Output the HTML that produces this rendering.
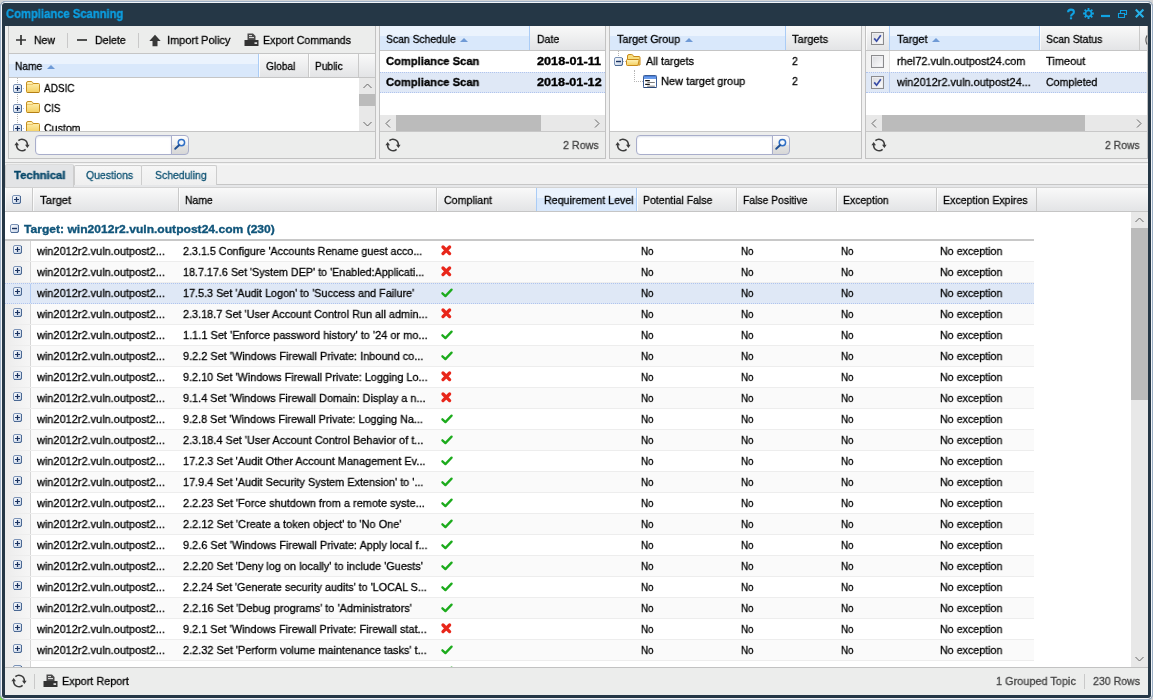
<!DOCTYPE html>
<html><head><meta charset="utf-8"><title>Compliance Scanning</title>
<style>
*{box-sizing:border-box;margin:0;padding:0}
html,body{width:1153px;height:700px;overflow:hidden}
body{background:#d2d3d5;font-family:"Liberation Sans",sans-serif;font-size:12px;color:#000;position:relative}
.abs{position:absolute}
svg.abs{display:block;overflow:visible}
#win{position:absolute;left:0;top:1px;width:1153px;height:699px;border:1px solid #9db0c6;border-radius:5px;background:#253746;box-shadow:inset 0 0 0 1px #f2f5f9}
#content{position:absolute;left:5px;top:26px;width:1143px;height:669px;background:#f0f0f0}
.panel{position:absolute;top:26px;height:133px;border:1px solid #c2c2c2;border-top:none;background:#ecedec}
.hc{position:absolute;border-right:1px solid #c9c9c9;box-shadow:inset 1px 0 0 rgba(255,255,255,.75)}
.hc.sort{background:linear-gradient(#ebf3fd 0,#ebf3fd 42%,#d9e8fb 43%,#d9e8fb 100%);border-right:1px solid #aaccf6;box-shadow:-1px 0 0 #aaccf6}
.arrow{position:absolute;width:0;height:0;border-left:4px solid transparent;border-right:4px solid transparent;border-bottom:4px solid #6f9ad6}
.pbody{position:absolute;background:#fff;overflow:hidden}
.t{will-change:transform;-webkit-text-stroke:0.3px;position:absolute;white-space:nowrap;font-size:11.5px;line-height:14px;transform-origin:0 50%}
.b{font-weight:bold}
.search{position:absolute;height:20px;border:1px solid #a9aecb;border-radius:4px 0 0 4px;background:#fff;box-shadow:inset 0 1px 2px #dfe4ee}
.sbtn{position:absolute;width:18px;height:20px;border:1px solid #a9aecb;border-radius:0 4px 4px 0;background:linear-gradient(#fdfdfd 0,#f1f1f1 48%,#e3e3e3 52%,#d7d7d7 100%)}
.tab{position:absolute;border:1px solid #cdcdcd;border-bottom:none;background:linear-gradient(#f6f6f6,#efefef);border-radius:2px 2px 0 0}
.tab.act{background:#e3e4e6;border-color:#dcdcdc #cdcdcd}
#gbody{position:absolute;left:5px;top:212px;width:1126px;height:455px;background:#fff;overflow:hidden}
#gbody .r{position:absolute;left:0;width:1029px;height:21px;border-bottom:1px solid #ededed;background:#fff}
#gbody .r.alt{background:#fafafa}
#gbody .r.sel{background:#dfe8f6;border-bottom:1px dotted #b0c4ee;border-top:1px dotted #b0c4ee}
.c0{position:absolute;left:0;top:0;width:26px;height:100%;border-right:1px solid #d6d6d6;background:linear-gradient(90deg,#ececec,#f6f6f6)}
.r.sel .c0{background:#dfe8f6;border-right-color:#b5cdf3}
#vsb{position:absolute;left:1131px;top:212px;width:17px;height:455px;background:#e8e8e8}
#fbar{position:absolute;left:5px;top:667px;width:1143px;height:28px;border-top:1px solid #c2c2c2;background:#ecedec}
.cb{position:absolute;width:13px;height:13px;border:1px solid #8b8b8d;background:linear-gradient(135deg,#d9dade,#fdfdfd);box-shadow:inset 0 0 0 1px #ededf0}
.t.b{-webkit-text-stroke:0.35px}
</style></head><body>
<svg width="0" height="0" style="position:absolute"><defs><linearGradient id="pg" x1="0" y1="0" x2="1" y2="1"><stop offset="0" stop-color="#ffffff"/><stop offset="1" stop-color="#c0cfe5"/></linearGradient><linearGradient id="fg" x1="0" y1="0" x2="0" y2="1"><stop offset="0" stop-color="#fff3b8"/><stop offset="1" stop-color="#f3cf61"/></linearGradient></defs></svg>
<div class="abs" style="left:0px;top:695px;width:5px;height:5px;background:#7ed348"></div>
<div id="win"></div>
<div id="content"></div>
<div class="t b" style="left:6.20px;top:7px;transform:scaleX(0.9068);color:#0c9fe2;font-size:12.4px">Compliance Scanning</div>
<svg class="abs" style="left:1066px;top:7px" width="82" height="14" viewBox="0 0 82 14"><g fill="none" stroke="#10a3e3">
  <path d="M2.1 5.3q0-2.7 2.9-2.7q2.9 0 2.9 2.4q0 1.3-1.4 2.2q-1.5 1-1.5 2.3" stroke-width="2.1"/>
  <path d="M3.9 11.3h2.2" stroke-width="2"/>
  <circle cx="22.5" cy="6.5" r="3" stroke-width="1.7"/>
  <path d="M22.5 1.1v2M22.5 9.9v2M17.1 6.5h2M25.9 6.5h2M18.7 2.7l1.4 1.4M24.9 8.9l1.4 1.4M18.7 10.3l1.4-1.4M24.9 4.1l1.4-1.4" stroke-width="1.9"/>
  <path d="M35 9h9" stroke-width="2.2"/>
  <path d="M52.5 6.5h6v4h-6z M54.5 6V3.5h6v4h-1.8" stroke-width="1.1"/>
  <path d="M69.8 2.6l7.6 7.6M77.4 2.6l-7.6 7.6" stroke-width="2.1" stroke="#27b2ea"/>
 </g></svg>
<div class="panel" style="left:8px;width:368px"></div>
<div class="abs" style="left:9px;top:53px;width:366px;height:1px;background:#c5c5c5"></div>
<svg class="abs" style="left:16px;top:35px" width="10" height="10" viewBox="0 0 10 10"><path d="M5 0v10M0 5h10" stroke="#333" stroke-width="1.7"/></svg>
<div class="t" style="left:34.30px;top:33px;transform:scaleX(0.9087)">New</div>
<div class="abs" style="left:67px;top:33px;width:1px;height:15px;background:#c9c9c9"></div>
<svg class="abs" style="left:77px;top:35px" width="10" height="10" viewBox="0 0 10 10"><path d="M0 5h10" stroke="#333" stroke-width="1.7"/></svg>
<div class="t" style="left:95.00px;top:33px;transform:scaleX(0.9249)">Delete</div>
<div class="abs" style="left:138px;top:33px;width:1px;height:15px;background:#c9c9c9"></div>
<svg class="abs" style="left:148.8px;top:34.5px" width="12" height="11" viewBox="0 0 12 11"><path d="M6 -0.3L11.7 6H8.5V11.3H3.5V6H0.3z" fill="#383838"/></svg>
<div class="t" style="left:166.50px;top:33px;transform:scaleX(0.9538)">Import Policy</div>
<svg class="abs" style="left:243.5px;top:33px" width="15" height="13" viewBox="0 0 15 13"><path d="M3.5 0.5h5.5l2.5 2.5V7h-8z" fill="#4a4a4a"/><path d="M5 2.6h3M5 4.6h5" stroke="#e6e6e6" stroke-width="1"/><path d="M0.5 7h14v6h-14z" fill="#333"/><rect x="10.5" y="9.3" width="2.6" height="1.6" fill="#f0f0f0"/></svg>
<div class="t" style="left:263.30px;top:33px;transform:scaleX(0.9239)">Export Commands</div>
<div class="abs" style="left:9px;top:54px;width:366px;height:23px;background:linear-gradient(#f9f9f9,#e3e4e6)"></div>
<div class="abs" style="left:9px;top:77px;width:366px;height:1px;background:#c5c5c5"></div>
<div class="hc sort" style="left:9px;top:54px;width:250px;height:23px;box-shadow:none;"></div>
<div class="hc" style="left:259px;top:54px;width:50px;height:23px;"></div>
<div class="hc" style="left:309px;top:54px;width:50px;height:23px;"></div>
<div class="t" style="left:15.30px;top:59px;transform:scaleX(0.8870)">Name</div>
<i class="arrow" style="left:47px;top:65px"></i>
<div class="t" style="left:265.60px;top:59px;transform:scaleX(0.8828)">Global</div>
<div class="t" style="left:315.30px;top:59px;transform:scaleX(0.8858)">Public</div>
<div class="pbody" style="left:9px;top:78px;width:366px;height:53px">
<div class="abs" style="left:350px;top:0px;width:16px;height:53px;background:#e8e8e8"></div>
<div class="abs" style="left:350px;top:16px;width:16px;height:12px;background:#bbbbbb"></div>
<svg class="abs" style="left:353.5px;top:5px" width="9" height="6" viewBox="0 0 9 6"><path d="M0.5 5L4.5 1L8.5 5" fill="none" stroke="#666" stroke-width="1"/></svg>
<svg class="abs" style="left:353.5px;top:42.5px" width="9" height="6" viewBox="0 0 9 6"><path d="M0.5 1L4.5 5L8.5 1" fill="none" stroke="#666" stroke-width="1"/></svg>
<div class="abs" style="left:8px;top:0px;width:0px;height:53px;border-left:1px dotted #b5b5b5"></div>
<svg class="abs" style="left:4px;top:6px" width="9" height="9" viewBox="0 0 9 9"><rect x="0.5" y="0.5" width="8" height="8" rx="1.5" fill="url(#pg)" stroke="#7a92b6"/><path d="M1 8.5h6q1.5 0 1.5-1.5v-6" fill="none" stroke="#4b6994"/><path d="M2 4.5h5M4.5 2v5" stroke="#1b3361" stroke-width="1.2"/></svg>
<svg class="abs" style="left:17px;top:3px" width="14" height="12" viewBox="0 0 14 12"><path d="M0.5 2q0-1.5 1.5-1.5h3.2q1 0 1.4 0.9l0.5 1.1h5.4q1 0 1 1v7q0 1-1 1h-11q-1 0-1-1z" fill="url(#fg)" stroke="#c8901e"/><path d="M1 3.5h6" stroke="#e3b655" stroke-width="1" opacity="0.7"/><path d="M1 11.5h12" stroke="#a8740f" stroke-width="1" opacity="0.6"/></svg>
<div class="abs" style="left:14px;top:10px;width:1px;height:1px;background:#c4c4c4"></div>
<div class="t" style="left:35.00px;top:3px;transform:scaleX(0.8689)">ADSIC</div>
<svg class="abs" style="left:4px;top:26px" width="9" height="9" viewBox="0 0 9 9"><rect x="0.5" y="0.5" width="8" height="8" rx="1.5" fill="url(#pg)" stroke="#7a92b6"/><path d="M1 8.5h6q1.5 0 1.5-1.5v-6" fill="none" stroke="#4b6994"/><path d="M2 4.5h5M4.5 2v5" stroke="#1b3361" stroke-width="1.2"/></svg>
<svg class="abs" style="left:17px;top:23px" width="14" height="12" viewBox="0 0 14 12"><path d="M0.5 2q0-1.5 1.5-1.5h3.2q1 0 1.4 0.9l0.5 1.1h5.4q1 0 1 1v7q0 1-1 1h-11q-1 0-1-1z" fill="url(#fg)" stroke="#c8901e"/><path d="M1 3.5h6" stroke="#e3b655" stroke-width="1" opacity="0.7"/><path d="M1 11.5h12" stroke="#a8740f" stroke-width="1" opacity="0.6"/></svg>
<div class="abs" style="left:14px;top:30px;width:1px;height:1px;background:#c4c4c4"></div>
<div class="t" style="left:35.00px;top:23px;transform:scaleX(0.8557)">CIS</div>
<svg class="abs" style="left:4px;top:46px" width="9" height="9" viewBox="0 0 9 9"><rect x="0.5" y="0.5" width="8" height="8" rx="1.5" fill="url(#pg)" stroke="#7a92b6"/><path d="M1 8.5h6q1.5 0 1.5-1.5v-6" fill="none" stroke="#4b6994"/><path d="M2 4.5h5M4.5 2v5" stroke="#1b3361" stroke-width="1.2"/></svg>
<svg class="abs" style="left:17px;top:43px" width="14" height="12" viewBox="0 0 14 12"><path d="M0.5 2q0-1.5 1.5-1.5h3.2q1 0 1.4 0.9l0.5 1.1h5.4q1 0 1 1v7q0 1-1 1h-11q-1 0-1-1z" fill="url(#fg)" stroke="#c8901e"/><path d="M1 3.5h6" stroke="#e3b655" stroke-width="1" opacity="0.7"/><path d="M1 11.5h12" stroke="#a8740f" stroke-width="1" opacity="0.6"/></svg>
<div class="abs" style="left:14px;top:50px;width:1px;height:1px;background:#c4c4c4"></div>
<div class="t" style="left:35.00px;top:43px;transform:scaleX(0.9233)">Custom</div>
</div>
<div class="abs" style="left:9px;top:131px;width:366px;height:1px;background:#c5c5c5"></div>
<svg class="abs" style="left:14px;top:138px" width="16" height="14" viewBox="0 0 16 14"><path d="M4.4 2.6A5.4 5.4 0 0 1 13.3 7.2M11.6 11.4A5.4 5.4 0 0 1 2.7 6.8" fill="none" stroke="#3c3c3c" stroke-width="1.6"/><path d="M11 6.7h4.6l-2.2 3.2z M0.4 7.3h4.6L2.7 4.1z" fill="#3c3c3c"/></svg>
<div class="search" style="left:35px;top:135px;width:137px"></div><div class="sbtn" style="left:171px;top:135px"></div><svg class="abs" style="left:173.6px;top:138.4px" width="12" height="13" viewBox="0 0 12 13"><circle cx="7.4" cy="4.6" r="3.2" fill="#f4f7fb" stroke="#2f6fc6" stroke-width="1.5"/><path d="M5 7.2L1.2 10.8" stroke="#1f4f93" stroke-width="1.9" stroke-linecap="round"/></svg>
<div class="panel" style="left:379px;width:227px"></div>
<div class="abs" style="left:380px;top:26px;width:225px;height:24px;background:linear-gradient(#f9f9f9,#e3e4e6)"></div>
<div class="abs" style="left:380px;top:50px;width:225px;height:1px;background:#c5c5c5"></div>
<div class="hc sort" style="left:380px;top:26px;width:150px;height:24px;box-shadow:none;"></div>
<div class="t" style="left:386.20px;top:32px;transform:scaleX(0.9020)">Scan Schedule</div>
<i class="arrow" style="left:460px;top:38px"></i>
<div class="t" style="left:536.50px;top:32px;transform:scaleX(0.9133)">Date</div>
<div class="pbody" style="left:380px;top:51px;width:225px;height:80px">
<div class="abs" style="left:0px;top:21px;width:225px;height:21px;background:#dfe8f6;border-top:1px dotted #b0c4ee;border-bottom:1px dotted #b0c4ee"></div>
<div class="t b" style="left:6.20px;top:3px;transform:scaleX(0.9736)">Compliance Scan</div>
<div class="t b" style="left:156.50px;top:3px;transform:scaleX(1.1010)">2018-01-11</div>
<div class="t b" style="left:6.20px;top:24px;transform:scaleX(0.9736)">Compliance Scan</div>
<div class="t b" style="left:156.50px;top:24px;transform:scaleX(1.0995)">2018-01-12</div>
<div class="abs" style="left:0px;top:64px;width:225px;height:16px;background:#e8e8e8"></div>
<div class="abs" style="left:16px;top:64px;width:145px;height:16px;background:#bbbbbb"></div>
<svg class="abs" style="left:5px;top:68px" width="6" height="9" viewBox="0 0 6 9"><path d="M5 0.5L1 4.5L5 8.5" fill="none" stroke="#666"/></svg>
<svg class="abs" style="left:214px;top:68px" width="6" height="9" viewBox="0 0 6 9"><path d="M1 0.5L5 4.5L1 8.5" fill="none" stroke="#666"/></svg>
</div>
<div class="abs" style="left:380px;top:131px;width:225px;height:1px;background:#c8c8c8"></div>
<svg class="abs" style="left:385px;top:138px" width="16" height="14" viewBox="0 0 16 14"><path d="M4.4 2.6A5.4 5.4 0 0 1 13.3 7.2M11.6 11.4A5.4 5.4 0 0 1 2.7 6.8" fill="none" stroke="#3c3c3c" stroke-width="1.6"/><path d="M11 6.7h4.6l-2.2 3.2z M0.4 7.3h4.6L2.7 4.1z" fill="#3c3c3c"/></svg>
<div class="t" style="left:562.80px;top:138px;transform:scaleX(0.9339);color:#444">2 Rows</div>
<div class="panel" style="left:609px;width:253px"></div>
<div class="abs" style="left:610px;top:26px;width:251px;height:24px;background:linear-gradient(#f9f9f9,#e3e4e6)"></div>
<div class="abs" style="left:610px;top:50px;width:251px;height:1px;background:#c5c5c5"></div>
<div class="hc sort" style="left:610px;top:26px;width:176px;height:24px;box-shadow:none;"></div>
<div class="t" style="left:616.50px;top:32px;transform:scaleX(0.9421)">Target Group</div>
<i class="arrow" style="left:685px;top:38px"></i>
<div class="t" style="left:792.30px;top:32px;transform:scaleX(0.9571)">Targets</div>
<div class="pbody" style="left:610px;top:51px;width:251px;height:80px">
<div class="abs" style="left:8px;top:0px;width:0px;height:7px;border-left:1px dotted #b5b5b5"></div>
<svg class="abs" style="left:4px;top:6px" width="9" height="9" viewBox="0 0 9 9"><rect x="0.5" y="0.5" width="8" height="8" rx="1.5" fill="url(#pg)" stroke="#7a92b6"/><path d="M1 8.5h6q1.5 0 1.5-1.5v-6" fill="none" stroke="#4b6994"/><path d="M2 4.5h5" stroke="#1b3361" stroke-width="1.4"/></svg>
<div class="abs" style="left:13px;top:10px;width:3px;height:0px;border-top:1px dotted #b5b5b5"></div>
<div class="abs" style="left:24px;top:19px;width:0px;height:12px;border-left:1px dotted #b5b5b5"></div>
<div class="abs" style="left:24px;top:30px;width:9px;height:0px;border-top:1px dotted #b5b5b5"></div>
<svg class="abs" style="left:16px;top:3px" width="15" height="12" viewBox="0 0 15 12"><path d="M1.5 11V2q0-1.5 1.5-1.5h2.6q1 0 1.4 0.9l0.5 1.1h5.5q1 0 1 1V11z" fill="#f7dd7e" stroke="#c98a18"/><path d="M1.5 11.5q-1 0-1-1V6.3q0-0.8 0.9-0.8H12q1.2 0 1 1l-0.8 4q-0.2 1-1.2 1z" fill="url(#fg)" stroke="#c98a18"/></svg>
<svg class="abs" style="left:33px;top:24px" width="14" height="13" viewBox="0 0 14 13"><rect x="0.5" y="0.5" width="13" height="12" rx="0.8" fill="#fff" stroke="#3b5d96"/><rect x="1" y="1" width="12" height="3" fill="#6a9bea"/><path d="M1 1.5h12" stroke="#4d82dc"/><path d="M2.2 5.6h4.6M2.2 9.4h4.6" stroke="#111" stroke-width="1.4"/><path d="M4.4 7.5h7.4M4.2 11.2h7.6" stroke="#7c7c7c" stroke-width="1"/><path d="M0.5 12.5h13" stroke="#2b4878"/></svg>
<div class="t" style="left:35.70px;top:3px;transform:scaleX(0.9367)">All targets</div>
<div class="t" style="left:182.30px;top:3px;transform:scaleX(0.9121)">2</div>
<div class="t" style="left:51.40px;top:23px;transform:scaleX(0.9561)">New target group</div>
<div class="t" style="left:182.30px;top:23px;transform:scaleX(0.9121)">2</div>
</div>
<div class="abs" style="left:610px;top:131px;width:251px;height:1px;background:#c8c8c8"></div>
<svg class="abs" style="left:614.8px;top:138px" width="16" height="14" viewBox="0 0 16 14"><path d="M4.4 2.6A5.4 5.4 0 0 1 13.3 7.2M11.6 11.4A5.4 5.4 0 0 1 2.7 6.8" fill="none" stroke="#3c3c3c" stroke-width="1.6"/><path d="M11 6.7h4.6l-2.2 3.2z M0.4 7.3h4.6L2.7 4.1z" fill="#3c3c3c"/></svg>
<div class="search" style="left:636px;top:135px;width:137px"></div><div class="sbtn" style="left:772px;top:135px"></div><svg class="abs" style="left:774.6px;top:138.4px" width="12" height="13" viewBox="0 0 12 13"><circle cx="7.4" cy="4.6" r="3.2" fill="#f4f7fb" stroke="#2f6fc6" stroke-width="1.5"/><path d="M5 7.2L1.2 10.8" stroke="#1f4f93" stroke-width="1.9" stroke-linecap="round"/></svg>
<div class="panel" style="left:865px;width:283px"></div>
<div class="abs" style="left:866px;top:26px;width:281px;height:24px;background:linear-gradient(#f9f9f9,#e3e4e6)"></div>
<div class="abs" style="left:866px;top:50px;width:281px;height:1px;background:#c5c5c5"></div>
<div class="hc" style="left:866px;top:26px;width:24px;height:24px;"></div>
<div class="hc sort" style="left:890px;top:26px;width:150px;height:24px;"></div>
<div class="hc" style="left:1040px;top:26px;width:100px;height:24px;"></div>
<div class="t" style="left:896.80px;top:32px;transform:scaleX(0.9572)">Target</div>
<i class="arrow" style="left:932px;top:38px"></i>
<div class="t" style="left:1046.30px;top:32px;transform:scaleX(0.9089)">Scan Status</div>
<svg class="abs" style="left:1144px;top:35px" width="3" height="10" viewBox="0 0 3 10"><path d="M3 0.5q-2.2 4.5 0 9" fill="none" stroke="#555" stroke-width="1.1"/></svg>
<div class="pbody" style="left:866px;top:51px;width:281px;height:80px">
<div class="abs" style="left:0px;top:21px;width:282px;height:21px;background:#dfe8f6;border-top:1px dotted #b0c4ee;border-bottom:1px dotted #b0c4ee"></div>
<div class="abs" style="left:0px;top:0px;width:24px;height:21px;background:linear-gradient(90deg,#f1f1f1,#f8f8f8);border-right:1px solid #e0e0e0"></div>
<div class="abs" style="left:23px;top:22px;width:1px;height:20px;background:#b9cdf0"></div>
<div class="t" style="left:30.80px;top:3px;transform:scaleX(0.9519)">rhel72.vuln.outpost24.com</div>
<div class="t" style="left:180.30px;top:3px;transform:scaleX(0.9561)">Timeout</div>
<div class="t" style="left:31.03px;top:24px;transform:scaleX(0.9512)">win2012r2.vuln.outpost24...</div>
<div class="t" style="left:180.30px;top:24px;transform:scaleX(0.9229)">Completed</div>
<div class="abs" style="left:0px;top:64px;width:281px;height:16px;background:#e8e8e8"></div>
<div class="abs" style="left:16px;top:64px;width:203px;height:16px;background:#bbbbbb"></div>
<svg class="abs" style="left:5px;top:68px" width="6" height="9" viewBox="0 0 6 9"><path d="M5 0.5L1 4.5L5 8.5" fill="none" stroke="#666"/></svg>
<svg class="abs" style="left:270px;top:68px" width="6" height="9" viewBox="0 0 6 9"><path d="M1 0.5L5 4.5L1 8.5" fill="none" stroke="#666"/></svg>
</div>
<div class="abs" style="left:866px;top:131px;width:281px;height:1px;background:#c8c8c8"></div>
<svg class="abs" style="left:871px;top:138px" width="16" height="14" viewBox="0 0 16 14"><path d="M4.4 2.6A5.4 5.4 0 0 1 13.3 7.2M11.6 11.4A5.4 5.4 0 0 1 2.7 6.8" fill="none" stroke="#3c3c3c" stroke-width="1.6"/><path d="M11 6.7h4.6l-2.2 3.2z M0.4 7.3h4.6L2.7 4.1z" fill="#3c3c3c"/></svg>
<div class="t" style="left:1105.10px;top:138px;transform:scaleX(0.9052);color:#444">2 Rows</div>
<div class="cb" style="left:871px;top:32px"></div><svg class="abs" style="left:873px;top:34px" width="9" height="9" viewBox="0 0 9 9"><path d="M1.2 4.4L3.6 7.2L7.8 1.2" fill="none" stroke="#3a4da6" stroke-width="1.7"/></svg>
<div class="cb" style="left:871px;top:55px"></div>
<div class="cb" style="left:871px;top:76px"></div><svg class="abs" style="left:873px;top:78px" width="9" height="9" viewBox="0 0 9 9"><path d="M1.2 4.4L3.6 7.2L7.8 1.2" fill="none" stroke="#3a4da6" stroke-width="1.7"/></svg>
<div class="abs" style="left:5px;top:162px;width:1143px;height:1px;background:#cacaca"></div>
<div class="abs" style="left:5px;top:164px;width:1143px;height:20px;background:#f1f1f1;border-top:1px solid #f8f8f8"></div>
<div class="abs" style="left:5px;top:184px;width:1143px;height:3px;background:#e6e7e9;border-top:1px solid #c6c6c6"></div>
<div class="abs" style="left:5px;top:187px;width:1143px;height:1px;background:#d2d2d2"></div>
<div class="tab act" style="left:5px;top:164px;width:69px;height:23px"></div>
<div class="tab" style="left:74px;top:165px;width:68px;height:20px"></div>
<div class="tab" style="left:141px;top:165px;width:76px;height:20px"></div>
<div class="t b" style="left:13.50px;top:168px;transform:scaleX(0.9860);color:#08486a">Technical</div>
<div class="t" style="left:86.40px;top:168px;transform:scaleX(0.9101);color:#0d5273">Questions</div>
<div class="t" style="left:154.50px;top:168px;transform:scaleX(0.9084);color:#0d5273">Scheduling</div>
<div class="abs" style="left:5px;top:188px;width:1143px;height:23px;background:linear-gradient(#f9f9f9,#e3e4e6)"></div>
<div class="abs" style="left:5px;top:211px;width:1143px;height:1px;background:#c5c5c5"></div>
<div class="hc" style="left:5px;top:188px;width:28px;height:23px;"></div>
<div class="hc" style="left:33px;top:188px;width:146px;height:23px;"></div>
<div class="hc" style="left:179px;top:188px;width:258px;height:23px;"></div>
<div class="hc" style="left:437px;top:188px;width:100px;height:23px;"></div>
<div class="hc sort" style="left:537px;top:188px;width:100px;height:23px;"></div>
<div class="hc" style="left:637px;top:188px;width:100px;height:23px;"></div>
<div class="hc" style="left:737px;top:188px;width:100px;height:23px;"></div>
<div class="hc" style="left:837px;top:188px;width:100px;height:23px;"></div>
<div class="hc" style="left:937px;top:188px;width:100px;height:23px;"></div>
<svg class="abs" style="left:12px;top:195px" width="9" height="9" viewBox="0 0 9 9"><rect x="0.5" y="0.5" width="8" height="8" rx="1.5" fill="url(#pg)" stroke="#7a92b6"/><path d="M1 8.5h6q1.5 0 1.5-1.5v-6" fill="none" stroke="#4b6994"/><path d="M2 4.5h5M4.5 2v5" stroke="#1b3361" stroke-width="1.2"/></svg>
<div class="t" style="left:39.50px;top:193px;transform:scaleX(0.9760)">Target</div>
<div class="t" style="left:185.30px;top:193px;transform:scaleX(0.9033)">Name</div>
<div class="t" style="left:443.60px;top:193px;transform:scaleX(0.9275)">Compliant</div>
<div class="t" style="left:543.50px;top:193px;transform:scaleX(0.9290)">Requirement Level</div>
<div class="t" style="left:643.40px;top:193px;transform:scaleX(0.9109)">Potential False</div>
<div class="t" style="left:743.30px;top:193px;transform:scaleX(0.8990)">False Positive</div>
<div class="t" style="left:843.20px;top:193px;transform:scaleX(0.9060)">Exception</div>
<div class="t" style="left:943.20px;top:193px;transform:scaleX(0.9196)">Exception Expires</div>
<div id="gbody">
<div class="r" style="top:29px"><div class="c0"></div></div>
<svg class="abs" style="left:8px;top:33px" width="9" height="9" viewBox="0 0 9 9"><rect x="0.5" y="0.5" width="8" height="8" rx="1.5" fill="url(#pg)" stroke="#7a92b6"/><path d="M1 8.5h6q1.5 0 1.5-1.5v-6" fill="none" stroke="#4b6994"/><path d="M2 4.5h5M4.5 2v5" stroke="#1b3361" stroke-width="1.2"/></svg>
<div class="t" style="left:32.13px;top:32px;transform:scaleX(0.9529)">win2012r2.vuln.outpost2...</div>
<div class="t" style="left:177.50px;top:32px;transform:scaleX(0.9347)">2.3.1.5 Configure 'Accounts Rename guest acco...</div>
<svg class="abs" style="left:436px;top:33px" width="11" height="11" viewBox="0 0 11 11"><path d="M2 2L8.6 8.6M8.6 2L2 8.6" stroke="#e8261a" stroke-width="3.3" stroke-linecap="round"/></svg>
<div class="t" style="left:635.60px;top:32px;transform:scaleX(0.8553)">No</div>
<div class="t" style="left:735.60px;top:32px;transform:scaleX(0.8553)">No</div>
<div class="t" style="left:835.60px;top:32px;transform:scaleX(0.8553)">No</div>
<div class="t" style="left:935.40px;top:32px;transform:scaleX(0.9302)">No exception</div>
<div class="r alt" style="top:50px"><div class="c0"></div></div>
<svg class="abs" style="left:8px;top:54px" width="9" height="9" viewBox="0 0 9 9"><rect x="0.5" y="0.5" width="8" height="8" rx="1.5" fill="url(#pg)" stroke="#7a92b6"/><path d="M1 8.5h6q1.5 0 1.5-1.5v-6" fill="none" stroke="#4b6994"/><path d="M2 4.5h5M4.5 2v5" stroke="#1b3361" stroke-width="1.2"/></svg>
<div class="t" style="left:32.13px;top:53px;transform:scaleX(0.9529)">win2012r2.vuln.outpost2...</div>
<div class="t" style="left:177.50px;top:53px;transform:scaleX(0.9356)">18.7.17.6 Set 'System DEP' to 'Enabled:Applicati...</div>
<svg class="abs" style="left:436px;top:54px" width="11" height="11" viewBox="0 0 11 11"><path d="M2 2L8.6 8.6M8.6 2L2 8.6" stroke="#e8261a" stroke-width="3.3" stroke-linecap="round"/></svg>
<div class="t" style="left:635.60px;top:53px;transform:scaleX(0.8553)">No</div>
<div class="t" style="left:735.60px;top:53px;transform:scaleX(0.8553)">No</div>
<div class="t" style="left:835.60px;top:53px;transform:scaleX(0.8553)">No</div>
<div class="t" style="left:935.40px;top:53px;transform:scaleX(0.9302)">No exception</div>
<div class="r sel" style="top:71px"><div class="c0"></div></div>
<svg class="abs" style="left:8px;top:75px" width="9" height="9" viewBox="0 0 9 9"><rect x="0.5" y="0.5" width="8" height="8" rx="1.5" fill="url(#pg)" stroke="#7a92b6"/><path d="M1 8.5h6q1.5 0 1.5-1.5v-6" fill="none" stroke="#4b6994"/><path d="M2 4.5h5M4.5 2v5" stroke="#1b3361" stroke-width="1.2"/></svg>
<div class="t" style="left:32.13px;top:74px;transform:scaleX(0.9529)">win2012r2.vuln.outpost2...</div>
<div class="t" style="left:177.50px;top:74px;transform:scaleX(0.9400)">17.5.3 Set 'Audit Logon' to 'Success and Failure'</div>
<svg class="abs" style="left:436px;top:76px" width="12" height="10" viewBox="0 0 12 10"><path d="M1.4 5.3L4.4 8.1L10.6 1.6" fill="none" stroke="#1cab1c" stroke-width="2.3" stroke-linecap="round" stroke-linejoin="round"/></svg>
<div class="t" style="left:635.60px;top:74px;transform:scaleX(0.8553)">No</div>
<div class="t" style="left:735.60px;top:74px;transform:scaleX(0.8553)">No</div>
<div class="t" style="left:835.60px;top:74px;transform:scaleX(0.8553)">No</div>
<div class="t" style="left:935.40px;top:74px;transform:scaleX(0.9302)">No exception</div>
<div class="r alt" style="top:92px"><div class="c0"></div></div>
<svg class="abs" style="left:8px;top:96px" width="9" height="9" viewBox="0 0 9 9"><rect x="0.5" y="0.5" width="8" height="8" rx="1.5" fill="url(#pg)" stroke="#7a92b6"/><path d="M1 8.5h6q1.5 0 1.5-1.5v-6" fill="none" stroke="#4b6994"/><path d="M2 4.5h5M4.5 2v5" stroke="#1b3361" stroke-width="1.2"/></svg>
<div class="t" style="left:32.13px;top:95px;transform:scaleX(0.9529)">win2012r2.vuln.outpost2...</div>
<div class="t" style="left:177.50px;top:95px;transform:scaleX(0.9436)">2.3.18.7 Set 'User Account Control Run all admin...</div>
<svg class="abs" style="left:436px;top:96px" width="11" height="11" viewBox="0 0 11 11"><path d="M2 2L8.6 8.6M8.6 2L2 8.6" stroke="#e8261a" stroke-width="3.3" stroke-linecap="round"/></svg>
<div class="t" style="left:635.60px;top:95px;transform:scaleX(0.8553)">No</div>
<div class="t" style="left:735.60px;top:95px;transform:scaleX(0.8553)">No</div>
<div class="t" style="left:835.60px;top:95px;transform:scaleX(0.8553)">No</div>
<div class="t" style="left:935.40px;top:95px;transform:scaleX(0.9302)">No exception</div>
<div class="r" style="top:113px"><div class="c0"></div></div>
<svg class="abs" style="left:8px;top:117px" width="9" height="9" viewBox="0 0 9 9"><rect x="0.5" y="0.5" width="8" height="8" rx="1.5" fill="url(#pg)" stroke="#7a92b6"/><path d="M1 8.5h6q1.5 0 1.5-1.5v-6" fill="none" stroke="#4b6994"/><path d="M2 4.5h5M4.5 2v5" stroke="#1b3361" stroke-width="1.2"/></svg>
<div class="t" style="left:32.13px;top:116px;transform:scaleX(0.9529)">win2012r2.vuln.outpost2...</div>
<div class="t" style="left:177.50px;top:116px;transform:scaleX(0.9559)">1.1.1 Set 'Enforce password history' to '24 or mo...</div>
<svg class="abs" style="left:436px;top:118px" width="12" height="10" viewBox="0 0 12 10"><path d="M1.4 5.3L4.4 8.1L10.6 1.6" fill="none" stroke="#1cab1c" stroke-width="2.3" stroke-linecap="round" stroke-linejoin="round"/></svg>
<div class="t" style="left:635.60px;top:116px;transform:scaleX(0.8553)">No</div>
<div class="t" style="left:735.60px;top:116px;transform:scaleX(0.8553)">No</div>
<div class="t" style="left:835.60px;top:116px;transform:scaleX(0.8553)">No</div>
<div class="t" style="left:935.40px;top:116px;transform:scaleX(0.9302)">No exception</div>
<div class="r alt" style="top:134px"><div class="c0"></div></div>
<svg class="abs" style="left:8px;top:138px" width="9" height="9" viewBox="0 0 9 9"><rect x="0.5" y="0.5" width="8" height="8" rx="1.5" fill="url(#pg)" stroke="#7a92b6"/><path d="M1 8.5h6q1.5 0 1.5-1.5v-6" fill="none" stroke="#4b6994"/><path d="M2 4.5h5M4.5 2v5" stroke="#1b3361" stroke-width="1.2"/></svg>
<div class="t" style="left:32.13px;top:137px;transform:scaleX(0.9529)">win2012r2.vuln.outpost2...</div>
<div class="t" style="left:177.50px;top:137px;transform:scaleX(0.9511)">9.2.2 Set 'Windows Firewall Private: Inbound co...</div>
<svg class="abs" style="left:436px;top:139px" width="12" height="10" viewBox="0 0 12 10"><path d="M1.4 5.3L4.4 8.1L10.6 1.6" fill="none" stroke="#1cab1c" stroke-width="2.3" stroke-linecap="round" stroke-linejoin="round"/></svg>
<div class="t" style="left:635.60px;top:137px;transform:scaleX(0.8553)">No</div>
<div class="t" style="left:735.60px;top:137px;transform:scaleX(0.8553)">No</div>
<div class="t" style="left:835.60px;top:137px;transform:scaleX(0.8553)">No</div>
<div class="t" style="left:935.40px;top:137px;transform:scaleX(0.9302)">No exception</div>
<div class="r" style="top:155px"><div class="c0"></div></div>
<svg class="abs" style="left:8px;top:159px" width="9" height="9" viewBox="0 0 9 9"><rect x="0.5" y="0.5" width="8" height="8" rx="1.5" fill="url(#pg)" stroke="#7a92b6"/><path d="M1 8.5h6q1.5 0 1.5-1.5v-6" fill="none" stroke="#4b6994"/><path d="M2 4.5h5M4.5 2v5" stroke="#1b3361" stroke-width="1.2"/></svg>
<div class="t" style="left:32.13px;top:158px;transform:scaleX(0.9529)">win2012r2.vuln.outpost2...</div>
<div class="t" style="left:177.50px;top:158px;transform:scaleX(0.9436)">9.2.10 Set 'Windows Firewall Private: Logging Lo...</div>
<svg class="abs" style="left:436px;top:159px" width="11" height="11" viewBox="0 0 11 11"><path d="M2 2L8.6 8.6M8.6 2L2 8.6" stroke="#e8261a" stroke-width="3.3" stroke-linecap="round"/></svg>
<div class="t" style="left:635.60px;top:158px;transform:scaleX(0.8553)">No</div>
<div class="t" style="left:735.60px;top:158px;transform:scaleX(0.8553)">No</div>
<div class="t" style="left:835.60px;top:158px;transform:scaleX(0.8553)">No</div>
<div class="t" style="left:935.40px;top:158px;transform:scaleX(0.9302)">No exception</div>
<div class="r alt" style="top:176px"><div class="c0"></div></div>
<svg class="abs" style="left:8px;top:180px" width="9" height="9" viewBox="0 0 9 9"><rect x="0.5" y="0.5" width="8" height="8" rx="1.5" fill="url(#pg)" stroke="#7a92b6"/><path d="M1 8.5h6q1.5 0 1.5-1.5v-6" fill="none" stroke="#4b6994"/><path d="M2 4.5h5M4.5 2v5" stroke="#1b3361" stroke-width="1.2"/></svg>
<div class="t" style="left:32.13px;top:179px;transform:scaleX(0.9529)">win2012r2.vuln.outpost2...</div>
<div class="t" style="left:177.50px;top:179px;transform:scaleX(0.9451)">9.1.4 Set 'Windows Firewall Domain: Display a n...</div>
<svg class="abs" style="left:436px;top:180px" width="11" height="11" viewBox="0 0 11 11"><path d="M2 2L8.6 8.6M8.6 2L2 8.6" stroke="#e8261a" stroke-width="3.3" stroke-linecap="round"/></svg>
<div class="t" style="left:635.60px;top:179px;transform:scaleX(0.8553)">No</div>
<div class="t" style="left:735.60px;top:179px;transform:scaleX(0.8553)">No</div>
<div class="t" style="left:835.60px;top:179px;transform:scaleX(0.8553)">No</div>
<div class="t" style="left:935.40px;top:179px;transform:scaleX(0.9302)">No exception</div>
<div class="r" style="top:197px"><div class="c0"></div></div>
<svg class="abs" style="left:8px;top:201px" width="9" height="9" viewBox="0 0 9 9"><rect x="0.5" y="0.5" width="8" height="8" rx="1.5" fill="url(#pg)" stroke="#7a92b6"/><path d="M1 8.5h6q1.5 0 1.5-1.5v-6" fill="none" stroke="#4b6994"/><path d="M2 4.5h5M4.5 2v5" stroke="#1b3361" stroke-width="1.2"/></svg>
<div class="t" style="left:32.13px;top:200px;transform:scaleX(0.9529)">win2012r2.vuln.outpost2...</div>
<div class="t" style="left:177.50px;top:200px;transform:scaleX(0.9420)">9.2.8 Set 'Windows Firewall Private: Logging Na...</div>
<svg class="abs" style="left:436px;top:202px" width="12" height="10" viewBox="0 0 12 10"><path d="M1.4 5.3L4.4 8.1L10.6 1.6" fill="none" stroke="#1cab1c" stroke-width="2.3" stroke-linecap="round" stroke-linejoin="round"/></svg>
<div class="t" style="left:635.60px;top:200px;transform:scaleX(0.8553)">No</div>
<div class="t" style="left:735.60px;top:200px;transform:scaleX(0.8553)">No</div>
<div class="t" style="left:835.60px;top:200px;transform:scaleX(0.8553)">No</div>
<div class="t" style="left:935.40px;top:200px;transform:scaleX(0.9302)">No exception</div>
<div class="r alt" style="top:218px"><div class="c0"></div></div>
<svg class="abs" style="left:8px;top:222px" width="9" height="9" viewBox="0 0 9 9"><rect x="0.5" y="0.5" width="8" height="8" rx="1.5" fill="url(#pg)" stroke="#7a92b6"/><path d="M1 8.5h6q1.5 0 1.5-1.5v-6" fill="none" stroke="#4b6994"/><path d="M2 4.5h5M4.5 2v5" stroke="#1b3361" stroke-width="1.2"/></svg>
<div class="t" style="left:32.13px;top:221px;transform:scaleX(0.9529)">win2012r2.vuln.outpost2...</div>
<div class="t" style="left:177.50px;top:221px;transform:scaleX(0.9484)">2.3.18.4 Set 'User Account Control Behavior of t...</div>
<svg class="abs" style="left:436px;top:223px" width="12" height="10" viewBox="0 0 12 10"><path d="M1.4 5.3L4.4 8.1L10.6 1.6" fill="none" stroke="#1cab1c" stroke-width="2.3" stroke-linecap="round" stroke-linejoin="round"/></svg>
<div class="t" style="left:635.60px;top:221px;transform:scaleX(0.8553)">No</div>
<div class="t" style="left:735.60px;top:221px;transform:scaleX(0.8553)">No</div>
<div class="t" style="left:835.60px;top:221px;transform:scaleX(0.8553)">No</div>
<div class="t" style="left:935.40px;top:221px;transform:scaleX(0.9302)">No exception</div>
<div class="r" style="top:239px"><div class="c0"></div></div>
<svg class="abs" style="left:8px;top:243px" width="9" height="9" viewBox="0 0 9 9"><rect x="0.5" y="0.5" width="8" height="8" rx="1.5" fill="url(#pg)" stroke="#7a92b6"/><path d="M1 8.5h6q1.5 0 1.5-1.5v-6" fill="none" stroke="#4b6994"/><path d="M2 4.5h5M4.5 2v5" stroke="#1b3361" stroke-width="1.2"/></svg>
<div class="t" style="left:32.13px;top:242px;transform:scaleX(0.9529)">win2012r2.vuln.outpost2...</div>
<div class="t" style="left:177.50px;top:242px;transform:scaleX(0.9477)">17.2.3 Set 'Audit Other Account Management Ev...</div>
<svg class="abs" style="left:436px;top:244px" width="12" height="10" viewBox="0 0 12 10"><path d="M1.4 5.3L4.4 8.1L10.6 1.6" fill="none" stroke="#1cab1c" stroke-width="2.3" stroke-linecap="round" stroke-linejoin="round"/></svg>
<div class="t" style="left:635.60px;top:242px;transform:scaleX(0.8553)">No</div>
<div class="t" style="left:735.60px;top:242px;transform:scaleX(0.8553)">No</div>
<div class="t" style="left:835.60px;top:242px;transform:scaleX(0.8553)">No</div>
<div class="t" style="left:935.40px;top:242px;transform:scaleX(0.9302)">No exception</div>
<div class="r alt" style="top:260px"><div class="c0"></div></div>
<svg class="abs" style="left:8px;top:264px" width="9" height="9" viewBox="0 0 9 9"><rect x="0.5" y="0.5" width="8" height="8" rx="1.5" fill="url(#pg)" stroke="#7a92b6"/><path d="M1 8.5h6q1.5 0 1.5-1.5v-6" fill="none" stroke="#4b6994"/><path d="M2 4.5h5M4.5 2v5" stroke="#1b3361" stroke-width="1.2"/></svg>
<div class="t" style="left:32.13px;top:263px;transform:scaleX(0.9529)">win2012r2.vuln.outpost2...</div>
<div class="t" style="left:177.50px;top:263px;transform:scaleX(0.9466)">17.9.4 Set 'Audit Security System Extension' to '...</div>
<svg class="abs" style="left:436px;top:265px" width="12" height="10" viewBox="0 0 12 10"><path d="M1.4 5.3L4.4 8.1L10.6 1.6" fill="none" stroke="#1cab1c" stroke-width="2.3" stroke-linecap="round" stroke-linejoin="round"/></svg>
<div class="t" style="left:635.60px;top:263px;transform:scaleX(0.8553)">No</div>
<div class="t" style="left:735.60px;top:263px;transform:scaleX(0.8553)">No</div>
<div class="t" style="left:835.60px;top:263px;transform:scaleX(0.8553)">No</div>
<div class="t" style="left:935.40px;top:263px;transform:scaleX(0.9302)">No exception</div>
<div class="r" style="top:281px"><div class="c0"></div></div>
<svg class="abs" style="left:8px;top:285px" width="9" height="9" viewBox="0 0 9 9"><rect x="0.5" y="0.5" width="8" height="8" rx="1.5" fill="url(#pg)" stroke="#7a92b6"/><path d="M1 8.5h6q1.5 0 1.5-1.5v-6" fill="none" stroke="#4b6994"/><path d="M2 4.5h5M4.5 2v5" stroke="#1b3361" stroke-width="1.2"/></svg>
<div class="t" style="left:32.13px;top:284px;transform:scaleX(0.9529)">win2012r2.vuln.outpost2...</div>
<div class="t" style="left:177.50px;top:284px;transform:scaleX(0.9520)">2.2.23 Set 'Force shutdown from a remote syste...</div>
<svg class="abs" style="left:436px;top:286px" width="12" height="10" viewBox="0 0 12 10"><path d="M1.4 5.3L4.4 8.1L10.6 1.6" fill="none" stroke="#1cab1c" stroke-width="2.3" stroke-linecap="round" stroke-linejoin="round"/></svg>
<div class="t" style="left:635.60px;top:284px;transform:scaleX(0.8553)">No</div>
<div class="t" style="left:735.60px;top:284px;transform:scaleX(0.8553)">No</div>
<div class="t" style="left:835.60px;top:284px;transform:scaleX(0.8553)">No</div>
<div class="t" style="left:935.40px;top:284px;transform:scaleX(0.9302)">No exception</div>
<div class="r alt" style="top:302px"><div class="c0"></div></div>
<svg class="abs" style="left:8px;top:306px" width="9" height="9" viewBox="0 0 9 9"><rect x="0.5" y="0.5" width="8" height="8" rx="1.5" fill="url(#pg)" stroke="#7a92b6"/><path d="M1 8.5h6q1.5 0 1.5-1.5v-6" fill="none" stroke="#4b6994"/><path d="M2 4.5h5M4.5 2v5" stroke="#1b3361" stroke-width="1.2"/></svg>
<div class="t" style="left:32.13px;top:305px;transform:scaleX(0.9529)">win2012r2.vuln.outpost2...</div>
<div class="t" style="left:177.50px;top:305px;transform:scaleX(0.9524)">2.2.12 Set 'Create a token object' to 'No One'</div>
<svg class="abs" style="left:436px;top:307px" width="12" height="10" viewBox="0 0 12 10"><path d="M1.4 5.3L4.4 8.1L10.6 1.6" fill="none" stroke="#1cab1c" stroke-width="2.3" stroke-linecap="round" stroke-linejoin="round"/></svg>
<div class="t" style="left:635.60px;top:305px;transform:scaleX(0.8553)">No</div>
<div class="t" style="left:735.60px;top:305px;transform:scaleX(0.8553)">No</div>
<div class="t" style="left:835.60px;top:305px;transform:scaleX(0.8553)">No</div>
<div class="t" style="left:935.40px;top:305px;transform:scaleX(0.9302)">No exception</div>
<div class="r" style="top:323px"><div class="c0"></div></div>
<svg class="abs" style="left:8px;top:327px" width="9" height="9" viewBox="0 0 9 9"><rect x="0.5" y="0.5" width="8" height="8" rx="1.5" fill="url(#pg)" stroke="#7a92b6"/><path d="M1 8.5h6q1.5 0 1.5-1.5v-6" fill="none" stroke="#4b6994"/><path d="M2 4.5h5M4.5 2v5" stroke="#1b3361" stroke-width="1.2"/></svg>
<div class="t" style="left:32.13px;top:326px;transform:scaleX(0.9529)">win2012r2.vuln.outpost2...</div>
<div class="t" style="left:177.50px;top:326px;transform:scaleX(0.9506)">9.2.6 Set 'Windows Firewall Private: Apply local f...</div>
<svg class="abs" style="left:436px;top:328px" width="12" height="10" viewBox="0 0 12 10"><path d="M1.4 5.3L4.4 8.1L10.6 1.6" fill="none" stroke="#1cab1c" stroke-width="2.3" stroke-linecap="round" stroke-linejoin="round"/></svg>
<div class="t" style="left:635.60px;top:326px;transform:scaleX(0.8553)">No</div>
<div class="t" style="left:735.60px;top:326px;transform:scaleX(0.8553)">No</div>
<div class="t" style="left:835.60px;top:326px;transform:scaleX(0.8553)">No</div>
<div class="t" style="left:935.40px;top:326px;transform:scaleX(0.9302)">No exception</div>
<div class="r alt" style="top:344px"><div class="c0"></div></div>
<svg class="abs" style="left:8px;top:348px" width="9" height="9" viewBox="0 0 9 9"><rect x="0.5" y="0.5" width="8" height="8" rx="1.5" fill="url(#pg)" stroke="#7a92b6"/><path d="M1 8.5h6q1.5 0 1.5-1.5v-6" fill="none" stroke="#4b6994"/><path d="M2 4.5h5M4.5 2v5" stroke="#1b3361" stroke-width="1.2"/></svg>
<div class="t" style="left:32.13px;top:347px;transform:scaleX(0.9529)">win2012r2.vuln.outpost2...</div>
<div class="t" style="left:177.50px;top:347px;transform:scaleX(0.9482)">2.2.20 Set 'Deny log on locally' to include 'Guests'</div>
<svg class="abs" style="left:436px;top:349px" width="12" height="10" viewBox="0 0 12 10"><path d="M1.4 5.3L4.4 8.1L10.6 1.6" fill="none" stroke="#1cab1c" stroke-width="2.3" stroke-linecap="round" stroke-linejoin="round"/></svg>
<div class="t" style="left:635.60px;top:347px;transform:scaleX(0.8553)">No</div>
<div class="t" style="left:735.60px;top:347px;transform:scaleX(0.8553)">No</div>
<div class="t" style="left:835.60px;top:347px;transform:scaleX(0.8553)">No</div>
<div class="t" style="left:935.40px;top:347px;transform:scaleX(0.9302)">No exception</div>
<div class="r" style="top:365px"><div class="c0"></div></div>
<svg class="abs" style="left:8px;top:369px" width="9" height="9" viewBox="0 0 9 9"><rect x="0.5" y="0.5" width="8" height="8" rx="1.5" fill="url(#pg)" stroke="#7a92b6"/><path d="M1 8.5h6q1.5 0 1.5-1.5v-6" fill="none" stroke="#4b6994"/><path d="M2 4.5h5M4.5 2v5" stroke="#1b3361" stroke-width="1.2"/></svg>
<div class="t" style="left:32.13px;top:368px;transform:scaleX(0.9529)">win2012r2.vuln.outpost2...</div>
<div class="t" style="left:177.50px;top:368px;transform:scaleX(0.9353)">2.2.24 Set 'Generate security audits' to 'LOCAL S...</div>
<svg class="abs" style="left:436px;top:370px" width="12" height="10" viewBox="0 0 12 10"><path d="M1.4 5.3L4.4 8.1L10.6 1.6" fill="none" stroke="#1cab1c" stroke-width="2.3" stroke-linecap="round" stroke-linejoin="round"/></svg>
<div class="t" style="left:635.60px;top:368px;transform:scaleX(0.8553)">No</div>
<div class="t" style="left:735.60px;top:368px;transform:scaleX(0.8553)">No</div>
<div class="t" style="left:835.60px;top:368px;transform:scaleX(0.8553)">No</div>
<div class="t" style="left:935.40px;top:368px;transform:scaleX(0.9302)">No exception</div>
<div class="r alt" style="top:386px"><div class="c0"></div></div>
<svg class="abs" style="left:8px;top:390px" width="9" height="9" viewBox="0 0 9 9"><rect x="0.5" y="0.5" width="8" height="8" rx="1.5" fill="url(#pg)" stroke="#7a92b6"/><path d="M1 8.5h6q1.5 0 1.5-1.5v-6" fill="none" stroke="#4b6994"/><path d="M2 4.5h5M4.5 2v5" stroke="#1b3361" stroke-width="1.2"/></svg>
<div class="t" style="left:32.13px;top:389px;transform:scaleX(0.9529)">win2012r2.vuln.outpost2...</div>
<div class="t" style="left:177.50px;top:389px;transform:scaleX(0.9558)">2.2.16 Set 'Debug programs' to 'Administrators'</div>
<svg class="abs" style="left:436px;top:391px" width="12" height="10" viewBox="0 0 12 10"><path d="M1.4 5.3L4.4 8.1L10.6 1.6" fill="none" stroke="#1cab1c" stroke-width="2.3" stroke-linecap="round" stroke-linejoin="round"/></svg>
<div class="t" style="left:635.60px;top:389px;transform:scaleX(0.8553)">No</div>
<div class="t" style="left:735.60px;top:389px;transform:scaleX(0.8553)">No</div>
<div class="t" style="left:835.60px;top:389px;transform:scaleX(0.8553)">No</div>
<div class="t" style="left:935.40px;top:389px;transform:scaleX(0.9302)">No exception</div>
<div class="r" style="top:407px"><div class="c0"></div></div>
<svg class="abs" style="left:8px;top:411px" width="9" height="9" viewBox="0 0 9 9"><rect x="0.5" y="0.5" width="8" height="8" rx="1.5" fill="url(#pg)" stroke="#7a92b6"/><path d="M1 8.5h6q1.5 0 1.5-1.5v-6" fill="none" stroke="#4b6994"/><path d="M2 4.5h5M4.5 2v5" stroke="#1b3361" stroke-width="1.2"/></svg>
<div class="t" style="left:32.13px;top:410px;transform:scaleX(0.9529)">win2012r2.vuln.outpost2...</div>
<div class="t" style="left:177.50px;top:410px;transform:scaleX(0.9475)">9.2.1 Set 'Windows Firewall Private: Firewall stat...</div>
<svg class="abs" style="left:436px;top:411px" width="11" height="11" viewBox="0 0 11 11"><path d="M2 2L8.6 8.6M8.6 2L2 8.6" stroke="#e8261a" stroke-width="3.3" stroke-linecap="round"/></svg>
<div class="t" style="left:635.60px;top:410px;transform:scaleX(0.8553)">No</div>
<div class="t" style="left:735.60px;top:410px;transform:scaleX(0.8553)">No</div>
<div class="t" style="left:835.60px;top:410px;transform:scaleX(0.8553)">No</div>
<div class="t" style="left:935.40px;top:410px;transform:scaleX(0.9302)">No exception</div>
<div class="r alt" style="top:428px"><div class="c0"></div></div>
<svg class="abs" style="left:8px;top:432px" width="9" height="9" viewBox="0 0 9 9"><rect x="0.5" y="0.5" width="8" height="8" rx="1.5" fill="url(#pg)" stroke="#7a92b6"/><path d="M1 8.5h6q1.5 0 1.5-1.5v-6" fill="none" stroke="#4b6994"/><path d="M2 4.5h5M4.5 2v5" stroke="#1b3361" stroke-width="1.2"/></svg>
<div class="t" style="left:32.13px;top:431px;transform:scaleX(0.9529)">win2012r2.vuln.outpost2...</div>
<div class="t" style="left:177.50px;top:431px;transform:scaleX(0.9510)">2.2.32 Set 'Perform volume maintenance tasks' t...</div>
<svg class="abs" style="left:436px;top:433px" width="12" height="10" viewBox="0 0 12 10"><path d="M1.4 5.3L4.4 8.1L10.6 1.6" fill="none" stroke="#1cab1c" stroke-width="2.3" stroke-linecap="round" stroke-linejoin="round"/></svg>
<div class="t" style="left:635.60px;top:431px;transform:scaleX(0.8553)">No</div>
<div class="t" style="left:735.60px;top:431px;transform:scaleX(0.8553)">No</div>
<div class="t" style="left:835.60px;top:431px;transform:scaleX(0.8553)">No</div>
<div class="t" style="left:935.40px;top:431px;transform:scaleX(0.9302)">No exception</div>
<div class="r" style="top:449px"><div class="c0"></div></div>
<svg class="abs" style="left:8px;top:453px" width="9" height="9" viewBox="0 0 9 9"><rect x="0.5" y="0.5" width="8" height="8" rx="1.5" fill="url(#pg)" stroke="#7a92b6"/><path d="M1 8.5h6q1.5 0 1.5-1.5v-6" fill="none" stroke="#4b6994"/><path d="M2 4.5h5M4.5 2v5" stroke="#1b3361" stroke-width="1.2"/></svg>
<div class="t" style="left:32.13px;top:453px;transform:scaleX(0.9529)">win2012r2.vuln.outpost2...</div>
<div class="t" style="left:177.50px;top:453px;transform:scaleX(0.9567)">2.3.1.1 Set 'Accounts: Administrator account sta...</div>
<svg class="abs" style="left:436px;top:454px" width="12" height="10" viewBox="0 0 12 10"><path d="M1.4 5.3L4.4 8.1L10.6 1.6" fill="none" stroke="#1cab1c" stroke-width="2.3" stroke-linecap="round" stroke-linejoin="round"/></svg>
<div class="t" style="left:635.60px;top:453px;transform:scaleX(0.8553)">No</div>
<div class="t" style="left:735.60px;top:453px;transform:scaleX(0.8553)">No</div>
<div class="t" style="left:835.60px;top:453px;transform:scaleX(0.8553)">No</div>
<div class="t" style="left:935.40px;top:453px;transform:scaleX(0.9302)">No exception</div>
<div class="abs" style="left:0px;top:27px;width:1029px;height:2px;background:#c8c8c8"></div>
<svg class="abs" style="left:5px;top:12px" width="9" height="9" viewBox="0 0 9 9"><rect x="0.5" y="0.5" width="8" height="8" rx="1.5" fill="url(#pg)" stroke="#7a92b6"/><path d="M1 8.5h6q1.5 0 1.5-1.5v-6" fill="none" stroke="#4b6994"/><path d="M2 4.5h5" stroke="#1b3361" stroke-width="1.4"/></svg>
<div class="t b" style="left:19.30px;top:10px;transform:scaleX(1.0504);color:#10557a">Target: win2012r2.vuln.outpost24.com (230)</div>
</div>
<div id="vsb"><svg class="abs" style="left:4px;top:5px" width="9" height="6" viewBox="0 0 9 6"><path d="M0.5 5L4.5 1L8.5 5" fill="none" stroke="#666" stroke-width="1"/></svg><svg class="abs" style="left:4px;top:444px" width="9" height="6" viewBox="0 0 9 6"><path d="M0.5 1L4.5 5L8.5 1" fill="none" stroke="#666" stroke-width="1"/></svg><div class="abs" style="left:0px;top:16px;width:17px;height:172px;background:#bbbbbb"></div></div>
<div id="fbar"></div>
<svg class="abs" style="left:11px;top:674px" width="16" height="14" viewBox="0 0 16 14"><path d="M4.4 2.6A5.4 5.4 0 0 1 13.3 7.2M11.6 11.4A5.4 5.4 0 0 1 2.7 6.8" fill="none" stroke="#3c3c3c" stroke-width="1.6"/><path d="M11 6.7h4.6l-2.2 3.2z M0.4 7.3h4.6L2.7 4.1z" fill="#3c3c3c"/></svg>
<div class="abs" style="left:34px;top:674px;width:1px;height:15px;background:#c9c9c9"></div>
<svg class="abs" style="left:43px;top:674px" width="15" height="13" viewBox="0 0 15 13"><path d="M3.5 0.5h5.5l2.5 2.5V7h-8z" fill="#4a4a4a"/><path d="M5 2.6h3M5 4.6h5" stroke="#e6e6e6" stroke-width="1"/><path d="M0.5 7h14v6h-14z" fill="#333"/><rect x="10.5" y="9.3" width="2.6" height="1.6" fill="#f0f0f0"/></svg>
<div class="t" style="left:62.40px;top:674px;transform:scaleX(0.9420)">Export Report</div>
<div class="t" style="left:995.50px;top:674px;transform:scaleX(0.9489);color:#444">1 Grouped Topic</div>
<div class="abs" style="left:1084px;top:674px;width:1px;height:15px;background:#c9c9c9"></div>
<div class="t" style="left:1093.20px;top:674px;transform:scaleX(0.9187);color:#444">230 Rows</div>
</body></html>
